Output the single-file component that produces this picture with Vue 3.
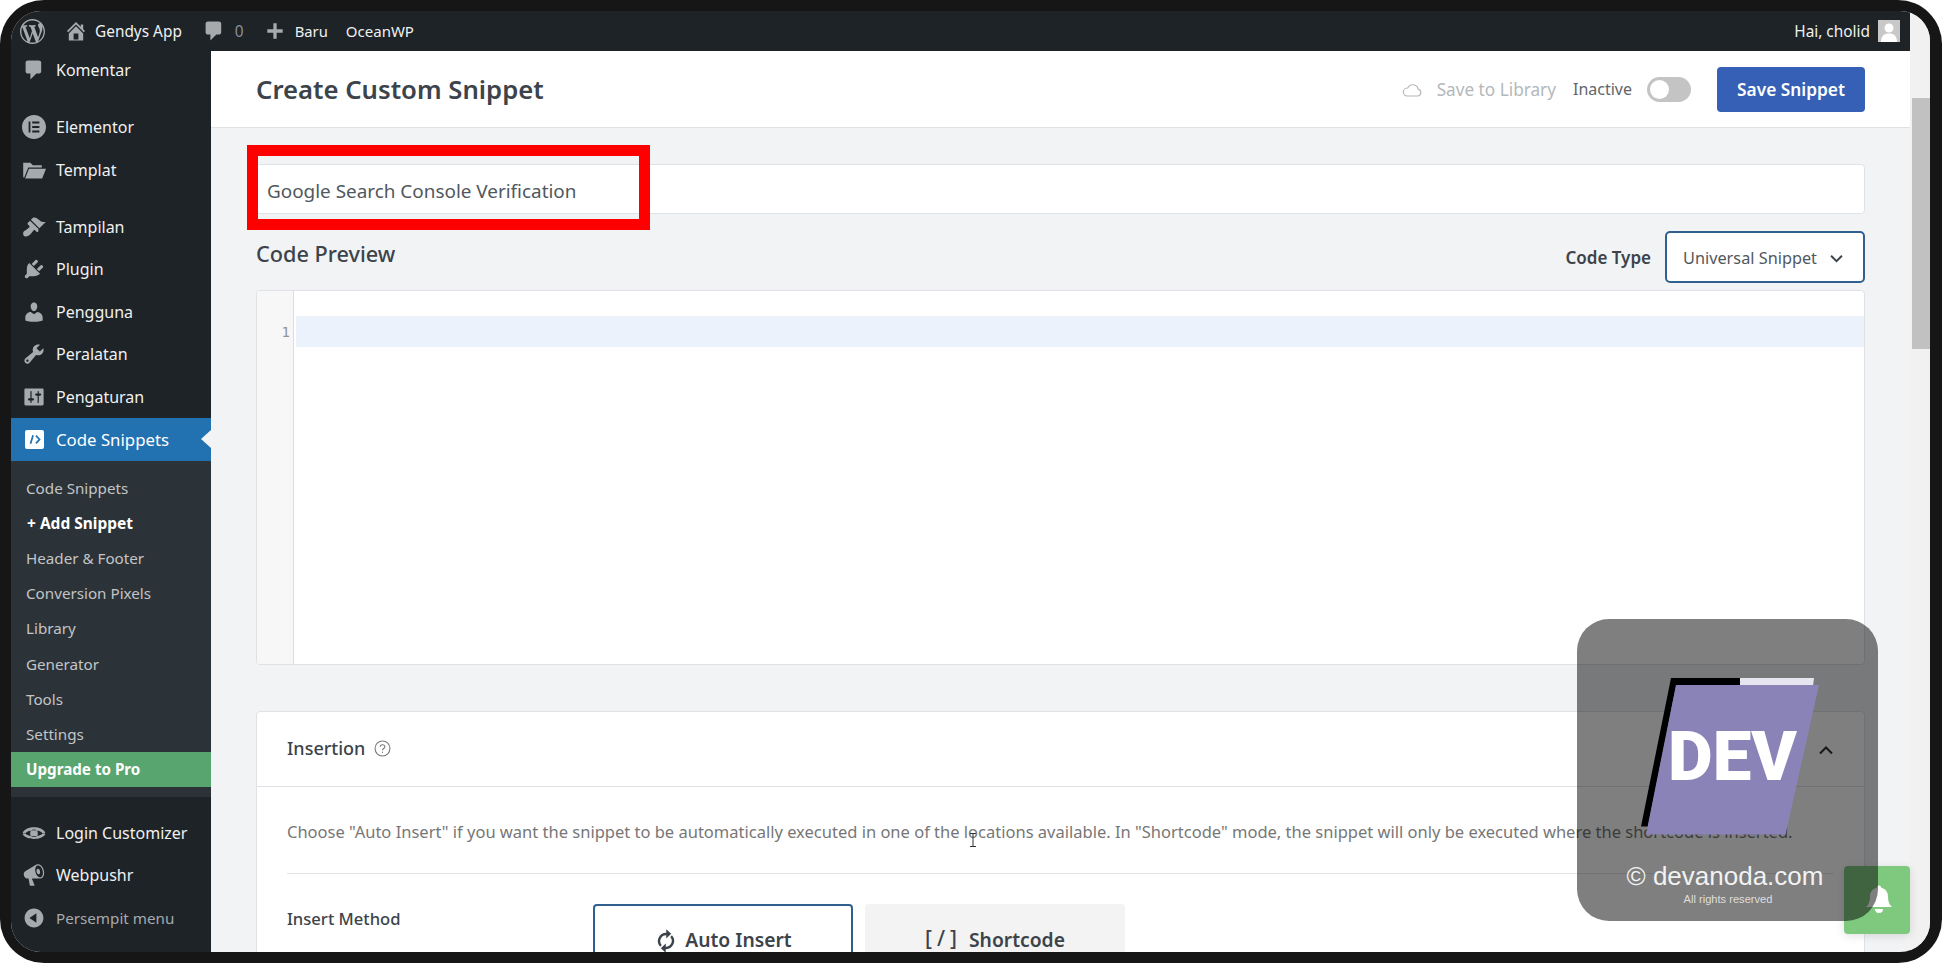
<script setup>
const icons = {
  wp: 'M20 10c0-5.51-4.49-10-10-10C4.48 0 0 4.49 0 10c0 5.52 4.48 10 10 10 5.51 0 10-4.48 10-10zM7.78 15.37L4.37 6.22c.55-.02 1.17-.08 1.17-.08.5-.06.44-1.13-.06-1.11 0 0-1.45.11-2.37.11-.18 0-.37 0-.58-.01C4.12 2.69 6.87 1.11 10 1.11c2.33 0 4.45.87 6.05 2.34-.68-.11-1.65.39-1.65 1.58 0 .74.45 1.36.9 2.1.35.61.55 1.36.55 2.46 0 1.49-1.4 5-1.4 5l-3.03-8.37c.54-.02.82-.17.82-.17.5-.05.44-1.25-.06-1.22 0 0-1.44.12-2.38.12-.87 0-2.33-.12-2.33-.12-.5-.03-.56 1.2-.06 1.22l.92.08 1.26 3.41zM17.41 10c.24-.64.74-1.87.43-4.25.7 1.29 1.05 2.71 1.05 4.25 0 3.29-1.73 6.24-4.4 7.78.97-2.59 1.94-5.2 2.92-7.78zM6.1 18.09C3.12 16.65 1.11 13.53 1.11 10c0-1.3.23-2.48.72-3.59C3.25 10.3 4.67 14.2 6.1 18.09zm4.03-6.63l2.58 6.98c-.86.29-1.76.45-2.71.45-.79 0-1.57-.11-2.29-.33.81-2.38 1.62-4.74 2.42-7.1z',
  home: 'M16 8.5l1.53 1.53-1.06 1.06L10 4.62l-6.47 6.47-1.06-1.06L10 2.5l4 4v-2h2v4zm-6-2.46l6 5.99V18H4v-5.97zM12 17v-5H8v5h4z',
  comment: 'M5 2h9q.82 0 1.41.59T16 4v7q0 .82-.59 1.41T14 13h-2l-5 5v-5H5q-.82 0-1.41-.59T3 11V4q0-.82.59-1.41T5 2z',
  plus: 'M17 8.5v3h-5.5V17h-3v-5.5H3v-3h5.5V3h3v5.5z',
  elementor: 'M10 0C4.48 0 0 4.48 0 10s4.48 10 10 10 10-4.48 10-10S15.52 0 10 0zM7 14.5H5.5v-9H7zm7.5 0H8.5V13h6zm0-3.75H8.500V9.250h6zm0-3.750H8.500V5.500h6z',
  folder: 'M1 4h6l2 2h7.500v2H5.200L1.800 16.500 1 15.800zM5.800 9H20l-3.200 8H2.600z',
  brush: 'M14.480 11.060L7.410 3.990l1.500-1.500c.5-.56 2.300-.47 3.510.32 1.210.8 1.430 1.280 2.910 2.100 1.180.64 2.450 1.260 4.450.85zm-.71.71L6.700 4.700 4.930 6.470c-.39.39-.39 1.020 0 1.410l1.060 1.060c.39.39.39 1.030 0 1.420-.6.6-1.430 1.110-2.210 1.690-.35.26-.7.53-1.010.84C1.430 13.230.4 14.800 1.200 16.800c.08.2.2.37.35.52.15.15.32.27.52.35 2 .79 3.560-.23 4.990-1.570.31-.31.57-.66.84-1.010.58-.78 1.090-1.610 1.690-2.210.39-.39 1.030-.39 1.420 0l1.060 1.060c.39.39 1.020.39 1.410 0z',
  plugin: 'M13.110 4.360L9.870 7.600 8 5.730l3.240-3.240c.35-.34 1.050-.2 1.560.32.52.51.66 1.210.31 1.550zm-8 1.770l.91-1.120 9.010 9.010-1.190.84c-.71.71-2.630 1.160-3.820 1.160H6.140L4.900 17.260c-.59.59-1.540.59-2.120 0-.59-.58-.59-1.530 0-2.120l1.240-1.240v-3.880c0-1.130.4-3.190 1.090-3.890zm7.260 3.970l3.240-3.240c.34-.35 1.040-.21 1.550.31.52.51.66 1.210.31 1.550l-3.240 3.250z',
  user: 'M10 9.250c-2.270 0-2.730-3.440-2.730-3.440C7 4.020 7.820 2 9.970 2c2.160 0 2.980 2.020 2.710 3.810 0 0-.41 3.440-2.680 3.440zm0 2.570L12.720 10c2.390 0 4.520 2.330 4.520 4.530v2.490s-3.650 1.130-7.240 1.130c-3.650 0-7.240-1.130-7.240-1.130v-2.490c0-2.250 1.940-4.480 4.470-4.480z',
  tools: 'M16.680 9.770c-1.340 1.340-3.300 1.670-4.950.99l-5.410 6.520c-.99.99-2.590.99-3.580 0s-.99-2.590 0-3.570l6.520-5.420c-.68-1.650-.35-3.610.99-4.950 1.280-1.280 3.120-1.620 4.720-1.060l-2.890 2.890 2.820 2.820 2.860-2.870c.53 1.580.18 3.390-1.080 4.650zM3.810 16.210c.4.39 1.040.39 1.430 0 .4-.4.4-1.040 0-1.430-.39-.4-1.030-.4-1.430 0-.39.39-.39 1.030 0 1.430z',
  settings: 'M18 16V4c0-.55-.45-1-1-1H3c-.55 0-1 .45-1 1v12c0 .55.45 1 1 1h14c.55 0 1-.45 1-1zM8 11h1c.55 0 1 .45 1 1s-.45 1-1 1H8v1.500c0 .28-.22.5-.5.5s-.5-.22-.5-.5V13H6c-.55 0-1-.45-1-1s.45-1 1-1h1V5.500c0-.28.22-.5.5-.5s.5.22.5.5V11zm5-2h-1c-.55 0-1-.45-1-1s.45-1 1-1h1V5.500c0-.28.22-.5.5-.5s.5.22.5.5V7h1c.55 0 1 .45 1 1s-.45 1-1 1h-1v5.500c0 .28-.22.5-.5.5s-.5-.22-.5-.5V9z',
  eye: 'M.5 9.800C3.500 3.700 16.500 3.700 19.500 9.800L17.700 10.600C14.500 6.800 5.500 6.800 2.300 10.600zM.5 10.800C3.500 16.300 16.500 16.300 19.500 10.800L17.700 10C14.500 13.700 5.500 13.700 2.300 10zM10 7a3.200 3.200 0 1 1 0 6.400A3.200 3.200 0 0 1 10 7z',
  megaphone: 'M18.150 5.940c.46 1.620.38 3.220-.02 4.480-.42 1.280-1.260 2.180-2.300 2.480-.16.06-.26.06-.4.06-.06.02-.12.02-.18.02-.06.02-.14.02-.22.02h-6.800l2.220 5.500c.02.14-.06.26-.14.34-.08.1-.24.16-.34.16H6.950c-.1 0-.26-.06-.34-.16-.08-.08-.16-.2-.14-.34l-1-5.500H4.250l-.02-.02c-.5.06-1.080-.18-1.540-.62s-.88-1.080-1.060-1.880c-.24-.8-.2-1.560-.02-2.200.18-.62.58-1.080 1.060-1.300l.02-.02 9-5.400c.1-.06.18-.1.24-.16.06-.04.14-.08.24-.12.16-.08.28-.12.5-.18 1.040-.3 2.240.1 3.220.98s1.840 2.240 2.260 3.860zm-2.580 5.980h-.02c.4-.1.74-.34 1.040-.7.58-.7.86-1.760.86-3.040-.02-.64-.1-1.300-.28-1.980-.34-1.360-1.020-2.500-1.780-3.240s-1.680-1.100-2.460-.88c-.82.22-1.400.96-1.700 2-.32 1.040-.28 2.360.06 3.720.38 1.360 1 2.500 1.800 3.240.78.74 1.620 1.100 2.480.88zm-2.540-7.080c.22-.04.42-.02.62.04.38.16.76.48 1.020 1s.42 1.200.42 1.780c0 .3-.04.56-.12.8-.18.48-.44.84-.86.94-.34.1-.8-.06-1.140-.4s-.64-.86-.78-1.500c-.18-.62-.12-1.240.02-1.720s.48-.84.82-.94z',
  collapse: 'M10 2.160c4.330 0 7.840 3.510 7.840 7.840s-3.510 7.840-7.840 7.840S2.160 14.330 2.160 10 5.710 2.160 10 2.160zm2 11.720V6.120L6.180 9.970z',
}
const firstMenu = [
  { label: 'Komentar', icon: 'comment' },
  { label: 'Elementor', icon: 'elementor', gap: true },
  { label: 'Templat', icon: 'folder' },
  { label: 'Tampilan', icon: 'brush', gap: true },
  { label: 'Plugin', icon: 'plugin' },
  { label: 'Pengguna', icon: 'user' },
  { label: 'Peralatan', icon: 'tools' },
  { label: 'Pengaturan', icon: 'settings' },
]
const subMenu = ['Code Snippets', '+ Add Snippet', 'Header & Footer', 'Conversion Pixels', 'Library', 'Generator', 'Tools', 'Settings', 'Upgrade to Pro']
</script>

<template>
  <div class="frame">
    <div class="window">
      <div class="page">
        <header class="adminbar">
          <svg class="wp" viewBox="0 0 20 20"><path :d="icons.wp" /></svg>
          <svg class="bar-ico home" viewBox="0 0 20 20"><path :d="icons.home" /></svg>
          <span class="site">Gendys App</span>
          <svg class="bar-ico cmt" viewBox="0 0 20 20"><path :d="icons.comment" /></svg>
          <span class="count">0</span>
          <svg class="bar-ico pls" viewBox="0 0 20 20"><path :d="icons.plus" /></svg>
          <span class="baru">Baru</span>
          <span class="ocean">OceanWP</span>
          <span class="hello">Hai, cholid</span>
          <span class="avatar">
            <svg viewBox="0 0 22 22"><rect width="22" height="22" fill="#c8c8c8" /><circle cx="11" cy="8" r="4.500" fill="#fff" /><path d="M3 22c0-6 3-8.500 8-8.500s8 2.500 8 8.500z" fill="#fff" /></svg>
          </span>
        </header>

        <div class="body">
          <aside class="sidebar">
            <div v-for="m in firstMenu" :key="m.label" class="item" :class="{ gap: m.gap }">
              <svg class="ico" viewBox="0 0 20 20"><path fill-rule="evenodd" :d="icons[m.icon]" /></svg>
              <span>{{ m.label }}</span>
            </div>
            <div class="item active">
              <svg class="ico-code" viewBox="0 0 20 20">
                <rect width="20" height="20" rx="2" fill="#fff" />
                <path d="M8.500 5.500 5.800 14.500M11.500 6 15.300 10l-3.800 4" fill="none" stroke="#2271b1" stroke-width="1.800" />
              </svg>
              <span>Code Snippets</span>
              <i class="pointer"></i>
            </div>
            <div class="submenu">
              <div
                v-for="s in subMenu"
                :key="s"
                class="sub"
                :class="{ strong: s === '+ Add Snippet', upgrade: s === 'Upgrade to Pro' }"
              >{{ s }}</div>
            </div>
            <div class="item gap bright">
              <svg class="ico" viewBox="0 0 20 20"><path fill-rule="evenodd" :d="icons.eye" /></svg>
              <span>Login Customizer</span>
            </div>
            <div class="item bright">
              <svg class="ico" viewBox="0 0 20 20"><path :d="icons.megaphone" /></svg>
              <span>Webpushr</span>
            </div>
            <div class="item dim">
              <svg class="ico" viewBox="0 0 20 20"><path :d="icons.collapse" /></svg>
              <span>Persempit menu</span>
            </div>
          </aside>

          <main class="main">
            <div class="titlebar">
              <h1>Create Custom Snippet</h1>
              <div class="actions">
                <svg class="cloud" viewBox="0 0 20 14" fill="none" stroke="#b4b8bb" stroke-width="1.200">
                  <path d="M5 13h10.500a3.500 3.500 0 0 0 .6-6.900A5.500 5.500 0 0 0 5.700 5 4 4 0 0 0 5 13z" />
                </svg>
                <span class="library">Save to Library</span>
                <span class="state">Inactive</span>
                <span class="toggle"><i></i></span>
                <button class="save">Save Snippet</button>
              </div>
            </div>

            <div class="content">
              <div class="name-field">
                <div class="name-input">Google Search Console Verification</div>
                <div class="highlight"></div>
              </div>

              <div class="preview-head">
                <h2>Code Preview</h2>
                <div class="type">
                  <span class="type-label">Code Type</span>
                  <div class="select">
                    <span>Universal Snippet</span>
                    <svg viewBox="0 0 12 8" fill="none" stroke="#3c434a" stroke-width="1.800"><path d="M1 1.500 6 6.500 11 1.500" /></svg>
                  </div>
                </div>
              </div>

              <div class="editor">
                <div class="gutter"><span>1</span></div>
                <div class="code"><div class="active-line"></div></div>
              </div>

              <section class="card">
                <div class="card-head">
                  <span class="card-title">Insertion</span>
                  <svg class="help" viewBox="0 0 16 16" fill="none" stroke="#777" stroke-width="1">
                    <circle cx="8" cy="8" r="7" />
                    <path d="M5.800 6.300C6 4.900 7 4.400 8 4.400c1.300 0 2.200.8 2.200 1.900 0 1.700-2.200 1.700-2.200 3.400" />
                    <path d="M8 11v1.200" />
                  </svg>
                  <svg class="caret" viewBox="0 0 14 9" fill="none" stroke="#2b2f33" stroke-width="2"><path d="M1 7.500 7 1.500 13 7.500" /></svg>
                </div>
                <div class="card-body">
                  <p class="desc">Choose "Auto Insert" if you want the snippet to be automatically executed in one of the locations available. In "Shortcode" mode, the snippet will only be executed where the shortcode is inserted.</p>
                  <div class="method">
                    <span class="method-label">Insert Method</span>
                    <div class="method-btn selected">
                      <svg viewBox="0 0 20 20"><path d="M10.200 3.700V1l3.800 3.500-3.800 3.500V5.500a4.600 4.600 0 0 0-3.500 7.600l-1.300 1.300a6.400 6.400 0 0 1 4.800-10.700zM9.800 16.300V19L6 15.500 9.800 12v2.500a4.600 4.600 0 0 0 3.500-7.600l1.300-1.300a6.400 6.400 0 0 1-4.800 10.700z" fill="#3c434a" /></svg>
                      <span>Auto Insert</span>
                    </div>
                    <div class="method-btn">
                      <span class="bracket">[/]</span>
                      <span>Shortcode</span>
                    </div>
                  </div>
                </div>
              </section>
            </div>
          </main>
        </div>
      </div>

      <div class="scrollbar"><i></i></div>
    </div>

    <svg class="ibeam" viewBox="0 0 8 14" fill="none" stroke="#333" stroke-width="1"><path d="M1 .5h6M4 .5v13M1 13.500h6" /></svg>

    <div class="push">
      <svg viewBox="0 0 28 32"><path d="M14 1.500c1.400 0 2.200 1 2.200 2.200 4.500 1 6.800 4.500 6.800 9 0 5 1.500 8 4 10.300H1c2.500-2.300 4-5.300 4-10.300 0-4.500 2.300-8 6.800-9 0-1.200.8-2.200 2.200-2.200z" fill="#fff" /><path d="M10 25h8a4 4 0 0 1-8 0z" fill="#fff" /></svg>
    </div>

    <div class="mark">
      <svg class="mark-logo" viewBox="0 0 178 158">
        <path d="M30 0h69v8H35L7 148.500H0z" fill="#000" />
        <path d="M99 0h74l-1 8H99z" fill="#e6e4ee" />
        <path d="M35 7h143l-33.500 149.500H5z" fill="#8a83b8" />
      </svg>
      <span class="mark-dev">DEV</span>
      <span class="mark-site">© devanoda.com</span>
      <span class="mark-rights">All rights reserved</span>
    </div>
  </div>
</template>

<style>
html, body { margin: 0; background: #fff; overflow: hidden; }
</style>

<style scoped>
* { box-sizing: border-box; }
.frame {
  position: relative;
  width: 1942px;
  height: 963px;
  padding: 11px 12px 11px 11px;
  background: #161616;
  border-radius: 44px;
  font-family: "Noto Sans", "Open Sans", sans-serif;
  overflow: hidden;
}
.window {
  display: flex;
  height: 941px;
  border-radius: 30px;
  overflow: hidden;
  background: #f1f3f5;
}
.page { flex: 1; min-width: 0; display: flex; flex-direction: column; }
.scrollbar { width: 20px; background: #f1f1f1; padding-top: 87px; }
.scrollbar i { display: block; height: 251px; margin-left: 2px; background: #c1c1c1; }

.adminbar {
  flex: none;
  height: 40px;
  display: flex;
  align-items: center;
  background: #1d2327;
  color: #f0f0f1;
  font-size: 15.400px;
  padding-left: 9px;
}
.adminbar svg { fill: #a7aaad; display: block; }
.wp { width: 25px; height: 25px; }
.bar-ico { width: 24px; height: 24px; }
.home { margin-left: 19px; }
.site { margin-left: 7px; }
.cmt { margin-left: 20px; }
.count { margin-left: 9px; color: #8c8f94; }
.pls { width: 22px; height: 22px; margin-left: 20px; }
.baru { margin-left: 9px; font-size: 14.800px; }
.ocean { margin-left: 18px; font-size: 15px; }
.hello { margin-left: auto; }
.avatar { margin: 0 10px 0 8px; width: 22px; height: 22px; }

.body { flex: 1; min-height: 0; display: flex; }
.sidebar {
  flex: none;
  width: 200px;
  background: #1d2327;
  color: #f0f0f1;
  font-size: 16px;
  overflow: hidden;
}
.item {
  position: relative;
  display: flex;
  align-items: center;
  gap: 10px;
  height: 42.6px;
  padding-left: 11px;
}
.item:first-child { margin-top: -2.300px; }
.item.gap { margin-top: 14.400px; }
.ico { width: 24px; height: 24px; fill: #a7aaad; flex: none; }
.ico-code { width: 19px; height: 19px; margin: 0 2px 0 3px; flex: none; }
.item.active { background: #2271b1; color: #fff; font-size: 16.800px; }
.pointer {
  position: absolute;
  right: 0;
  top: 12px;
  width: 0;
  height: 0;
  border: 9px solid transparent;
  border-left-width: 0;
  border-right: 10px solid #f1f3f5;
}
.item.dim { color: #a7aaad; font-size: 15.200px; }
.submenu { background: #2c3338; padding: 9.800px 0 9.600px; }
.sub {
  height: 35.200px;
  line-height: 35.200px;
  padding-left: 15px;
  font-size: 15.200px;
  color: #c3c4c7;
}
.sub.strong { color: #fff; font-weight: 700; font-size: 15.500px; padding-left: 16px; }
.sub.upgrade { background: #59a56f; color: #fff; font-weight: 700; }

.main { flex: 1; min-width: 0; display: flex; flex-direction: column; overflow: hidden; }
.titlebar {
  flex: none;
  height: 77px;
  display: flex;
  align-items: center;
  justify-content: space-between;
  padding: 0 45px;
  background: #fff;
  border-bottom: 1px solid #dfe1e4;
}
h1 { margin: 0; font-size: 25.700px; font-weight: 600; color: #3c434a; }
.actions { display: flex; align-items: center; }
.cloud { width: 20px; height: 14px; margin-right: 15px; margin-top: 2px; }
.library { font-size: 17.200px; color: #b4b8bb; }
.state { margin-left: 17px; font-size: 16px; color: #5f666b; }
.toggle {
  margin-left: 15px;
  width: 44px;
  height: 25px;
  padding: 3px;
  border-radius: 13px;
  background: #c4c4c4;
}
.toggle i { display: block; width: 19px; height: 19px; border-radius: 50%; background: #fff; }
.save {
  margin-left: 26px;
  width: 148px;
  height: 45px;
  border: 0;
  border-radius: 4px;
  background: #3560b5;
  color: #fff;
  font: 600 17.300px "Noto Sans", sans-serif;
}

.content { flex: 1; min-height: 0; padding: 36px 45px 0; overflow: hidden; }
.name-field { position: relative; }
.name-input {
  height: 50px;
  line-height: 52px;
  padding-left: 10px;
  background: #fff;
  border: 1px solid #e0e3e6;
  border-radius: 4px;
  font-size: 18.900px;
  color: #50575e;
}
.highlight {
  position: absolute;
  left: -9px;
  top: -19px;
  width: 403px;
  height: 85px;
  border: 11px solid #f00;
}
.preview-head {
  margin-top: 17px;
  display: flex;
  justify-content: space-between;
  align-items: flex-start;
}
h2 { margin: 8px 0 0; font-size: 21.700px; line-height: 30px; font-weight: 500; color: #3c434a; }
.type { display: flex; align-items: center; }
.type-label { font-size: 17px; font-weight: 600; color: #3c434a; margin-right: 14px; }
.select {
  width: 200px;
  height: 52px;
  display: flex;
  align-items: center;
  justify-content: space-between;
  padding: 2px 20px 0 16px;
  background: #fff;
  border: 2px solid #31608f;
  border-radius: 5px;
  font-size: 16.300px;
  color: #50575e;
}
.select svg { width: 13px; height: 9px; }
.editor {
  margin-top: 7px;
  height: 375px;
  display: flex;
  background: #fff;
  border: 1px solid #dfe1e4;
  border-radius: 4px;
  overflow: hidden;
}
.gutter {
  flex: none;
  width: 37px;
  background: #f7f7f7;
  border-right: 1px solid #dcdcdc;
  padding: 32px 3px 0 0;
  height: 100%;
  text-align: right;
  font: 14px/18px "DejaVu Sans Mono", monospace;
  color: #8f9396;
}
.code { flex: 1; padding: 25px 0 0 2px; }
.active-line { height: 31px; background: #ebf2fb; }

.card {
  margin-top: 46px;
  background: #fff;
  border: 1px solid #e0e3e6;
  border-radius: 4px;
  height: 400px;
}
.card-head {
  display: flex;
  align-items: center;
  height: 75px;
  padding: 0 30px 3px;
  border-bottom: 1px solid #dfe1e4;
}
.card-title { font-size: 18px; font-weight: 500; color: #3c434a; }
.help { width: 17px; height: 17px; margin-left: 9px; margin-top: 2px; }
.caret { width: 14px; height: 9px; margin-left: auto; margin-right: 1px; margin-top: 6px; }
.card-body { padding: 0 30px; }
.desc {
  margin: 0;
  height: 87px;
  padding-top: 33px;
  line-height: 24px;
  font-size: 16.500px;
  color: #777;
  white-space: nowrap;
  border-bottom: 1px solid #e2e4e7;
}
.method { display: flex; padding-top: 30px; }
.method-label {
  width: 306px;
  font-size: 16.600px;
  font-weight: 500;
  line-height: 30px;
  color: #3c434a;
}
.method-btn {
  width: 260px;
  height: 90px;
  margin-right: 12px;
  padding-top: 24px;
  display: flex;
  justify-content: center;
  gap: 7px;
  align-items: flex-start;
  background: #f3f3f3;
  border-radius: 4px;
  font-size: 19.300px;
  line-height: 24px;
  font-weight: 600;
  color: #3c434a;
}
.method-btn.selected { background: #fff; border: 2px solid #31608f; padding-top: 22px; gap: 5px; }
.method-btn svg { width: 28px; height: 26px; margin-left: -2px; }
.bracket { font-size: 21px; line-height: 21px; font-weight: 500; letter-spacing: 5px; }

.ibeam { position: absolute; left: 969px; top: 833px; width: 8px; height: 14px; }

.push {
  position: absolute;
  left: 1844px;
  top: 866px;
  width: 66px;
  height: 68px;
  padding: 18px 0 0 21px;
  background: #7fc97f;
  border-radius: 4px;
  box-shadow: 0 2px 10px rgba(0, 0, 0, .12);
}
.push svg { display: block; width: 28px; height: 32px; }

.mark {
  position: absolute;
  left: 1577px;
  top: 619px;
  width: 301px;
  height: 302px;
  border-radius: 32px;
  background: rgba(0, 0, 0, .5);
  color: #fff;
  font-family: "Liberation Sans", Arial, sans-serif;
}
.mark-logo { position: absolute; left: 64px; top: 59px; width: 178px; height: 158px; }
.mark-dev {
  position: absolute;
  left: 91px;
  top: 96px;
  font: 900 69px/84px Roboto, sans-serif;
  letter-spacing: 0;
}
.mark-site {
  position: absolute;
  left: 0;
  right: 5px;
  top: 241px;
  text-align: center;
  font-size: 26px;
  line-height: 32px;
  color: #f2f2f2;
}
.mark-rights {
  position: absolute;
  left: 0;
  right: -1px;
  top: 273px;
  text-align: center;
  font-size: 11.100px;
  line-height: 14px;
  color: #dedede;
}
</style>
